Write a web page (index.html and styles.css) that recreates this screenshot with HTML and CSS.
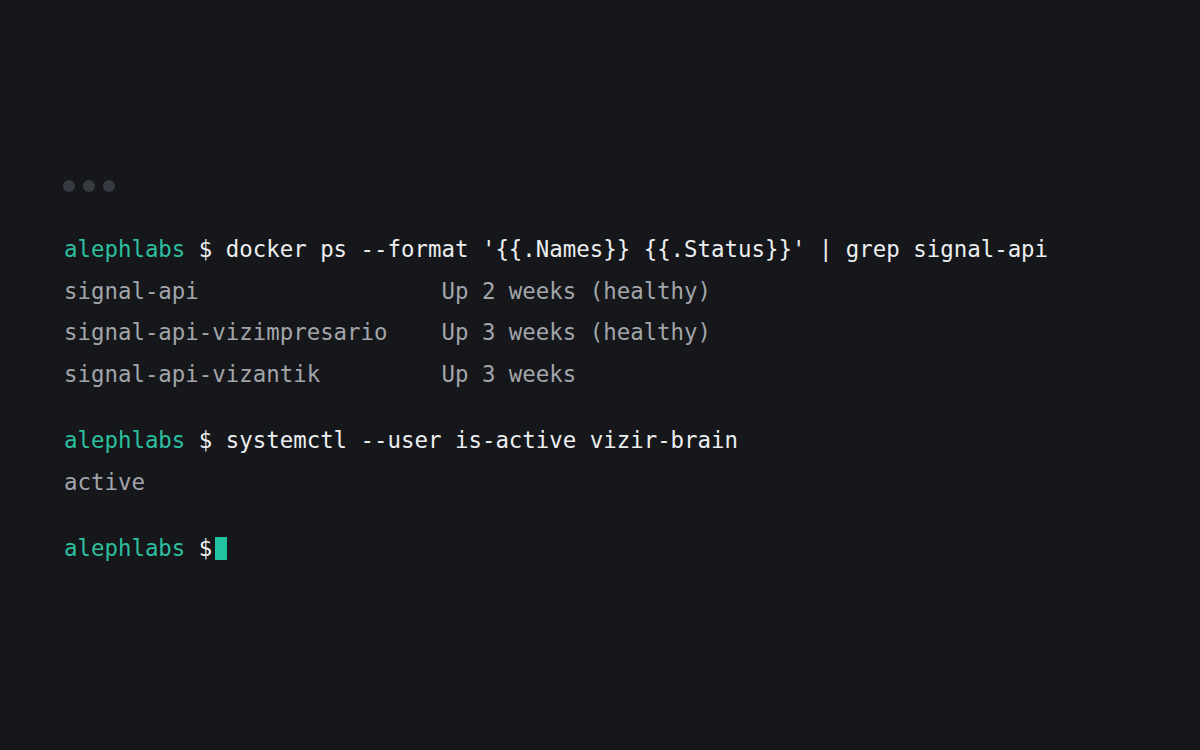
FILE: index.html
```html
<!DOCTYPE html>
<html lang="en">
<head>
<meta charset="utf-8">
<title>Terminal</title>
<link rel="stylesheet" href="styles.css">
</head>
<body>
<main class="term">
  <div class="dots"><span class="dot"></span><span class="dot"></span><span class="dot"></span></div>
  <section class="block">
    <div class="line"><span class="prompt">alephlabs</span> <span class="cmd">$ docker ps --format '{{.Names}} {{.Status}}' | grep signal-api</span></div>
    <div class="table">
      <span class="out">signal-api</span><span class="out">Up 2 weeks (healthy)</span>
      <span class="out">signal-api-vizimpresario</span><span class="out">Up 3 weeks (healthy)</span>
      <span class="out">signal-api-vizantik</span><span class="out">Up 3 weeks</span>
    </div>
  </section>
  <section class="block">
    <div class="line"><span class="prompt">alephlabs</span> <span class="cmd">$ systemctl --user is-active vizir-brain</span></div>
    <div class="line out">active</div>
  </section>
  <section class="block">
    <div class="line"><span class="prompt">alephlabs</span> <span class="cmd">$</span><span class="cursor"></span></div>
  </section>
</main>
</body>
</html>
```

FILE: styles.css
```css
html, body {
  margin: 0;
  padding: 0;
  background: #15171b;
}
body {
  width: 1200px;
  height: 750px;
  overflow: hidden;
}
.term {
  padding: 180px 0 0 64px;
  font-family: "DejaVu Sans Mono", "Liberation Mono", monospace;
  font-size: 22.4px;
  line-height: 41.5px;
  color: #e9eaec;
}
.dots {
  display: flex;
  gap: 8px;
  margin-left: -1px;
  height: 12px;
  margin-bottom: 37px;
}
.dot {
  width: 12px;
  height: 12px;
  border-radius: 50%;
  background: #363a41;
}
.block + .block {
  margin-top: 25px;
}
.line {
  white-space: pre;
  height: 41.5px;
}
.prompt {
  color: #2dbf9f;
}
.cmd {
  color: #eceef0;
}
.out {
  color: #a2a5aa;
  white-space: pre;
}
.table {
  display: grid;
  grid-template-columns: 28ch auto;
}
.cursor {
  display: inline-block;
  vertical-align: middle;
  width: 12px;
  height: 23px;
  margin-left: 3px;
  margin-top: -3px;
  background: #20c4a0;
}
```
